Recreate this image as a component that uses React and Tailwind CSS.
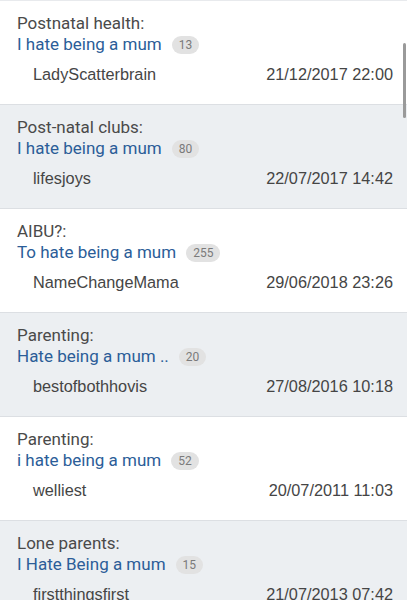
const threads = [
  { cat: 'Postnatal health:', title: 'I hate being a mum', count: 13, user: 'LadyScatterbrain', date: '21/12/2017 22:00' },
  { cat: 'Post-natal clubs:', title: 'I hate being a mum', count: 80, user: 'lifesjoys', date: '22/07/2017 14:42' },
  { cat: 'AIBU?:', title: 'To hate being a mum', count: 255, user: 'NameChangeMama', date: '29/06/2018 23:26' },
  { cat: 'Parenting:', title: 'Hate being a mum ..', count: 20, user: 'bestofbothhovis', date: '27/08/2016 10:18' },
  { cat: 'Parenting:', title: 'i hate being a mum', count: 52, user: 'welliest', date: '20/07/2011 11:03' },
  { cat: 'Lone parents:', title: 'I Hate Being a mum', count: 15, user: 'firstthingsfirst', date: '21/07/2013 07:42' },
]

function ThreadRow({ t, shaded }) {
  return (
    <div className={`border-b border-[#dcdfe3] pt-[12px] pb-[19px] pl-[17px] pr-[14px] ${shaded ? 'bg-[#eceff2]' : 'bg-white'}`}>
      <div className="font-['Roboto',sans-serif] text-[17px] leading-[21px] text-[#4a4a4a]">{t.cat}</div>
      <div className="flex items-center font-['Roboto',sans-serif] text-[17px] leading-[21px] text-[#2b5d98]">
        <span>{t.title}</span>
        <span className="ml-[10px] rounded-full bg-[#e2e2e2] px-[7px] text-[12px] leading-[18px] text-[#7a7a7a]">{t.count}</span>
      </div>
      <div className="mt-[9px] flex justify-between pl-[16px] font-['Liberation_Sans',Arial,sans-serif] text-[16.3px] leading-[21px] text-[#454545]">
        <span>{t.user}</span>
        <span>{t.date}</span>
      </div>
    </div>
  )
}

export default function App() {
  return (
    <div className="relative h-[600px] w-[407px] overflow-hidden bg-white">
      <div className="h-[1px] bg-[#e8eaed]" />
      {threads.map((t, i) => (
        <ThreadRow key={i} t={t} shaded={i % 2 === 1} />
      ))}
      <div className="absolute right-[1px] top-[43px] h-[75px] w-[3px] rounded-full bg-[#9a9a9a]" />
    </div>
  )
}
